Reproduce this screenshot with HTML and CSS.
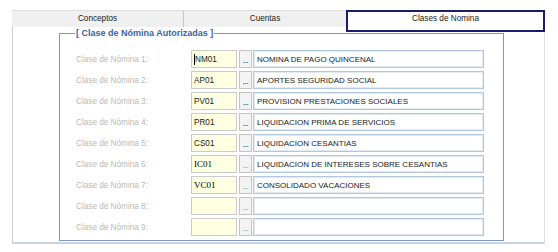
FILE: index.html
```html
<!DOCTYPE html>
<html lang="es">
<head>
<meta charset="utf-8">
<title>Clases de Nomina</title>
<link rel="stylesheet" href="styles.css">
</head>
<body>
<div class="wrap">
  <div class="tabstrip">
    <div class="tab tab-conceptos">Conceptos</div>
    <div class="tab tab-cuentas">Cuentas</div>
    <div class="tab tab-active">Clases de Nomina</div>
  </div>
  <div class="panel">
    <fieldset class="group">
      <legend class="group-title">[ Clase de Nómina Autorizadas ]</legend>
      <div class="rows">
        <div class="row"><span class="label">Clase de Nómina 1:</span><span class="code"><span class="caret"></span>NM01</span><span class="btn">...</span><span class="desc">NOMINA DE PAGO QUINCENAL</span></div>
        <div class="row"><span class="label">Clase de Nómina 2:</span><span class="code">AP01</span><span class="btn">...</span><span class="desc">APORTES SEGURIDAD SOCIAL</span></div>
        <div class="row"><span class="label">Clase de Nómina 3:</span><span class="code">PV01</span><span class="btn">...</span><span class="desc">PROVISION PRESTACIONES SOCIALES</span></div>
        <div class="row"><span class="label">Clase de Nómina 4:</span><span class="code">PR01</span><span class="btn">...</span><span class="desc">LIQUIDACION PRIMA DE SERVICIOS</span></div>
        <div class="row"><span class="label">Clase de Nómina 5:</span><span class="code">CS01</span><span class="btn">...</span><span class="desc">LIQUIDACION CESANTIAS</span></div>
        <div class="row"><span class="label">Clase de Nómina 6:</span><span class="code code-serif">IC01</span><span class="btn btn-dim">...</span><span class="desc">LIQUIDACION DE INTERESES SOBRE CESANTIAS</span></div>
        <div class="row"><span class="label">Clase de Nómina 7:</span><span class="code code-serif">VC01</span><span class="btn btn-dim">...</span><span class="desc">CONSOLIDADO VACACIONES</span></div>
        <div class="row"><span class="label">Clase de Nómina 8:</span><span class="code"></span><span class="btn btn-dim">...</span><span class="desc"></span></div>
        <div class="row"><span class="label">Clase de Nómina 9:</span><span class="code"></span><span class="btn btn-dim">...</span><span class="desc"></span></div>
      </div>
    </fieldset>
  </div>
</div>
</body>
</html>
```

FILE: styles.css
```css
* { box-sizing: border-box; }
html, body { margin: 0; padding: 0; background: #ffffff; }
body {
  font-family: "Liberation Sans", Arial, sans-serif;
  font-size: 8.2px;
  color: #1a1a1a;
}
.wrap {
  margin: 10px 0 0 12px;
  width: 533px;
}
.tabstrip {
  display: flex;
  height: 17px;
  background: #f0f0f0;
  border-top: 1px solid #dedede;
}
.tab {
  height: 16px;
  line-height: 16px;
  text-align: center;
  color: #222;
}
.tab-conceptos { width: 172px; border-right: 1px solid #b9c9db; }
.tab-cuentas { width: 162px; }
.tab-active {
  position: relative;
  z-index: 1;
  width: 199px;
  height: 22px;
  margin-top: -1px;
  margin-bottom: -5px;
  background: #ffffff;
  border: 2px solid #1b1b6b;
  line-height: 14px;
}
.panel {
  height: 217px;
  border-left: 1px solid #cfcfcf;
  border-right: 1px solid #e2e2e2;
  border-bottom: 2px solid #c7d4e4;
  padding-top: 1px;
}
.group {
  margin: 0 0 0 46px;
  width: 445px;
  padding: 0;
  border: 1px solid #7f98c0;
}
.group-title {
  margin-left: 15px;
  padding: 0 1px;
  line-height: 11px;
  font-size: 9px;
  font-weight: bold;
  color: #3a62a8;
}
.rows {
  display: flex;
  flex-direction: column;
  gap: 3px;
  padding: 11px 0 4px 16px;
}
.row {
  display: flex;
  align-items: center;
  height: 18px;
}
.label {
  width: 115px;
  color: #b9b9b9;
}
.code {
  display: flex;
  align-items: center;
  width: 46px;
  height: 18px;
  padding-left: 2px;
  background: #ffffe1;
  border: 1px solid #cbcbcb;
  color: #1a1a1a;
}
.code-serif {
  font-family: "Liberation Serif", "Times New Roman", serif;
  font-size: 9px;
  color: #000;
}
.caret {
  display: inline-block;
  width: 1px;
  height: 11px;
  background: #000;
}
.btn {
  display: flex;
  align-items: flex-end;
  justify-content: center;
  width: 13px;
  height: 18px;
  margin-left: 2px;
  padding-bottom: 2px;
  background: #f3f3f3;
  border: 1px solid #c3c3c3;
  color: #333;
  line-height: 8px;
  letter-spacing: -0.5px;
}
.btn-dim { color: #9a9a9a; }
.desc {
  display: flex;
  align-items: center;
  width: 231px;
  height: 18px;
  margin-left: 1px;
  padding-left: 3px;
  border: 1px solid #b3c7de;
  box-shadow: inset 0 0 0 1px #e1e9f3;
  background: #ffffff;
  color: #1a1a1a;
  font-size: 8px;
  white-space: nowrap;
  overflow: hidden;
}
```
